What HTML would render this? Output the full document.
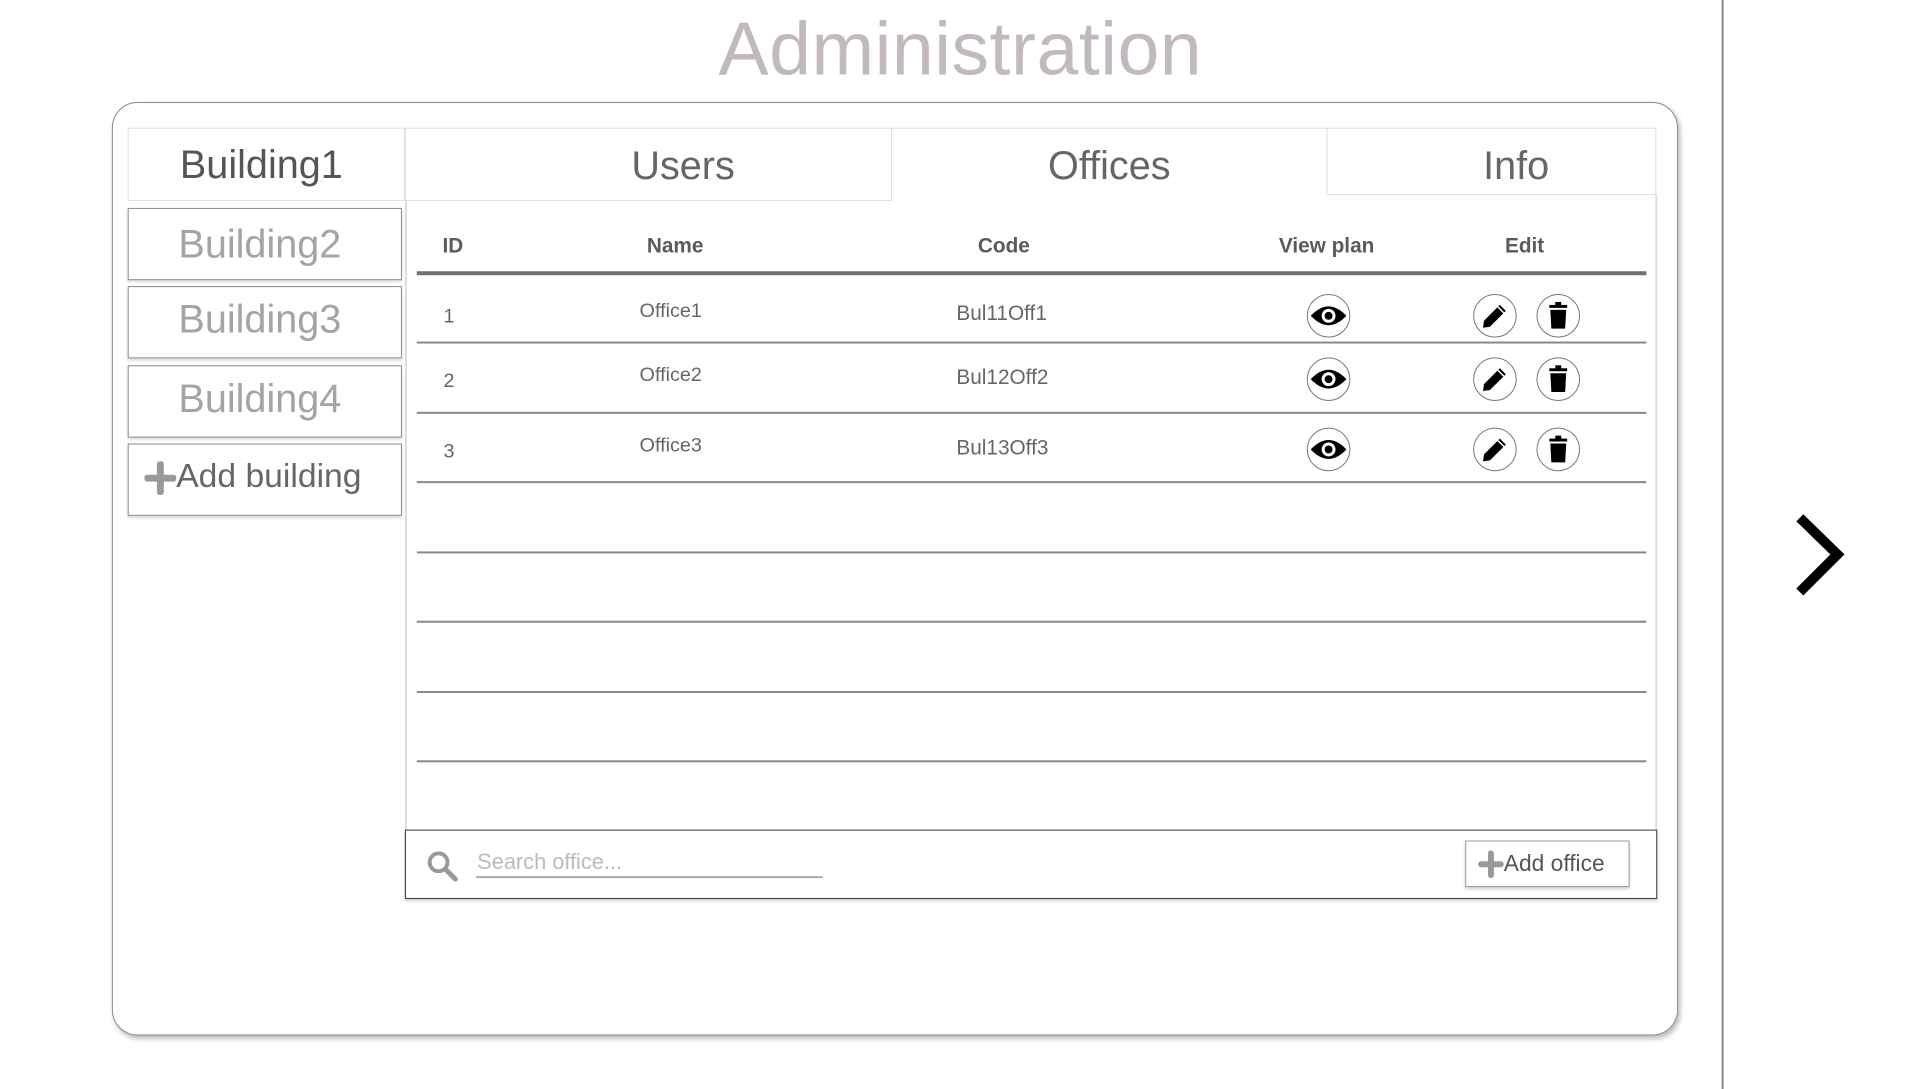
<!DOCTYPE html>
<html><head><meta charset="utf-8"><style>
*{box-sizing:border-box;margin:0;padding:0}
body{width:1920px;height:1080px;background:#fff;position:relative;overflow:hidden;font-family:"Liberation Sans",sans-serif;color:#555}
#w{position:absolute;left:0;top:0;width:1940px;height:1100px;transform:scale(0.99);transform-origin:0 0}
.a{position:absolute}
.title{left:0;width:1940px;top:6px;text-align:center;font-size:76px;color:#c2baba;letter-spacing:0.5px}
.card{left:113px;top:103px;width:1582px;height:943px;border:1.5px solid #8a8a8a;border-radius:26px;box-shadow:2px 3px 5px rgba(0,0,0,.25)}
.vline{left:1739px;top:0;width:2px;height:1100px;background:#888}
.bt{left:129px;width:277px;border:1.5px solid #888;font-size:40px;color:#a4a4a4;text-align:center;box-shadow:0 2px 3px rgba(0,0,0,.15);padding-right:10px}
.tab{top:129px;height:74px;font-size:40px;text-align:center;line-height:76px;color:#666;border:1.5px solid #ddd}
.hdr{top:237px;font-size:21px;font-weight:bold;color:#5a5a5a}
.sep{left:421px;width:1242px;height:1.5px;background:#888}
.cell{font-size:20px;color:#666}
.code{font-size:21px}
.ic{width:44px;height:44px;border:1px solid #777;border-radius:50%;display:flex;align-items:center;justify-content:center}
</style></head><body><div id="w">
<div class="a title">Administration</div>
<div class="a card"></div>
<div class="a vline"></div>
<svg class="a" style="left:1808px;top:518px" width="60" height="85" viewBox="0 0 60 85"><polyline points="10,5 48,42 10,80" fill="none" stroke="#000" stroke-width="10"/></svg>

<div class="a bt" style="top:129px;height:74px;line-height:74px;color:#555;border-color:#ddd;box-shadow:none;width:280px">Building1</div>
<div class="a bt" style="top:210px;height:73px;line-height:72px">Building2</div>
<div class="a bt" style="top:289px;height:73px;line-height:66px">Building3</div>
<div class="a bt" style="top:369px;height:73px;line-height:66px">Building4</div>
<div class="a bt" style="top:448px;height:73px;line-height:64px;color:#666;font-size:34px;text-align:left;padding-left:16px"><svg width="32" height="34" viewBox="0 0 32 34" style="vertical-align:-8px"><path d="M16 3V31M3 17H29" stroke="#999" stroke-width="7" stroke-linecap="round"/></svg>Add building</div>

<div class="a tab" style="left:409px;width:492px;padding-left:70px">Users</div>
<div class="a tab" style="left:901px;width:439px;border-bottom:none;border-left:none;border-right:none">Offices</div>
<div class="a tab" style="left:1340px;width:333px;height:68px;line-height:76px;padding-left:50px">Info</div>
<div class="a" style="left:409px;top:203px;width:1.5px;height:635px;background:#ddd"></div>
<div class="a" style="left:1672px;top:197px;width:1.5px;height:641px;background:#ddd"></div>

<div class="a hdr" style="left:447px">ID</div>
<div class="a hdr" style="left:632px;width:100px;text-align:center">Name</div>
<div class="a hdr" style="left:964px;width:100px;text-align:center">Code</div>
<div class="a hdr" style="left:1270px;width:140px;text-align:center">View plan</div>
<div class="a hdr" style="left:1490px;width:100px;text-align:center">Edit</div>
<div class="a" style="left:421px;top:274px;width:1242px;height:4px;background:#707070"></div>
<div class="a sep" style="top:345px"></div>
<div class="a sep" style="top:416px"></div>
<div class="a sep" style="top:486px"></div>
<div class="a sep" style="top:557px"></div>
<div class="a sep" style="top:627px"></div>
<div class="a sep" style="top:698px"></div>
<div class="a sep" style="top:768px"></div>

<div class="a cell" style="left:448px;top:309px">1</div>
<div class="a cell" style="left:646px;top:303px">Office1</div>
<div class="a cell code" style="left:966px;top:305px">Bul11Off1</div>
<div class="a cell" style="left:448px;top:374px">2</div>
<div class="a cell" style="left:646px;top:368px">Office2</div>
<div class="a cell code" style="left:966px;top:370px">Bul12Off2</div>
<div class="a cell" style="left:448px;top:445px">3</div>
<div class="a cell" style="left:646px;top:439px">Office3</div>
<div class="a cell code" style="left:966px;top:441px">Bul13Off3</div>

<div class="a" style="left:0;top:297px">
<div class="a ic" style="left:1320px"><svg width="40" height="26" viewBox="0 0 40 26"><path d="M2 13 Q20 -6 38 13 Q20 32 2 13Z" fill="#000"/><circle cx="20" cy="13" r="7" fill="#fff"/><circle cx="20" cy="13" r="4" fill="#000"/></svg></div>
<div class="a ic" style="left:1488px"><svg width="30" height="30" viewBox="0 0 30 30"><path d="M20 4 L26 10 L10 26 L3 27 L4 20Z" fill="#000"/><path d="M18 6 L24 12" stroke="#fff" stroke-width="1.5"/></svg></div>
<div class="a ic" style="left:1552px"><svg width="24" height="30" viewBox="0 0 24 30"><rect x="3" y="4" width="18" height="3" fill="#000"/><rect x="9" y="1" width="6" height="4" fill="#000"/><path d="M4 9 H20 L19 28 H5Z" fill="#000"/></svg></div>
</div>
<div class="a" style="left:0;top:361px">
<div class="a ic" style="left:1320px"><svg width="40" height="26" viewBox="0 0 40 26"><path d="M2 13 Q20 -6 38 13 Q20 32 2 13Z" fill="#000"/><circle cx="20" cy="13" r="7" fill="#fff"/><circle cx="20" cy="13" r="4" fill="#000"/></svg></div>
<div class="a ic" style="left:1488px"><svg width="30" height="30" viewBox="0 0 30 30"><path d="M20 4 L26 10 L10 26 L3 27 L4 20Z" fill="#000"/><path d="M18 6 L24 12" stroke="#fff" stroke-width="1.5"/></svg></div>
<div class="a ic" style="left:1552px"><svg width="24" height="30" viewBox="0 0 24 30"><rect x="3" y="4" width="18" height="3" fill="#000"/><rect x="9" y="1" width="6" height="4" fill="#000"/><path d="M4 9 H20 L19 28 H5Z" fill="#000"/></svg></div>
</div>
<div class="a" style="left:0;top:432px">
<div class="a ic" style="left:1320px"><svg width="40" height="26" viewBox="0 0 40 26"><path d="M2 13 Q20 -6 38 13 Q20 32 2 13Z" fill="#000"/><circle cx="20" cy="13" r="7" fill="#fff"/><circle cx="20" cy="13" r="4" fill="#000"/></svg></div>
<div class="a ic" style="left:1488px"><svg width="30" height="30" viewBox="0 0 30 30"><path d="M20 4 L26 10 L10 26 L3 27 L4 20Z" fill="#000"/><path d="M18 6 L24 12" stroke="#fff" stroke-width="1.5"/></svg></div>
<div class="a ic" style="left:1552px"><svg width="24" height="30" viewBox="0 0 24 30"><rect x="3" y="4" width="18" height="3" fill="#000"/><rect x="9" y="1" width="6" height="4" fill="#000"/><path d="M4 9 H20 L19 28 H5Z" fill="#000"/></svg></div>
</div>

<div class="a" style="left:409px;top:838px;width:1265px;height:70px;border:1.5px solid #333;box-shadow:0 2px 3px rgba(0,0,0,.2)"></div>
<svg class="a" style="left:430px;top:858px" width="34" height="34" viewBox="0 0 34 34"><circle cx="13" cy="13" r="9" fill="none" stroke="#999" stroke-width="4"/><line x1="20" y1="20" x2="30" y2="30" stroke="#999" stroke-width="5" stroke-linecap="round"/></svg>
<div class="a" style="left:482px;top:858px;font-size:22px;color:#bbb">Search office...</div>
<div class="a" style="left:481px;top:885px;width:350px;height:2px;background:#aaa"></div>
<div class="a" style="left:1480px;top:849px;width:166px;height:47px;border:1.5px solid #999;box-shadow:0 2px 3px rgba(0,0,0,.2);font-size:23px;color:#555;line-height:44px;padding-left:12px;white-space:nowrap"><svg width="26" height="28" viewBox="0 0 26 28" style="vertical-align:-7px"><path d="M13 3V25M3 14H23" stroke="#999" stroke-width="6" stroke-linecap="round"/></svg>Add office</div>
</div></body></html>
